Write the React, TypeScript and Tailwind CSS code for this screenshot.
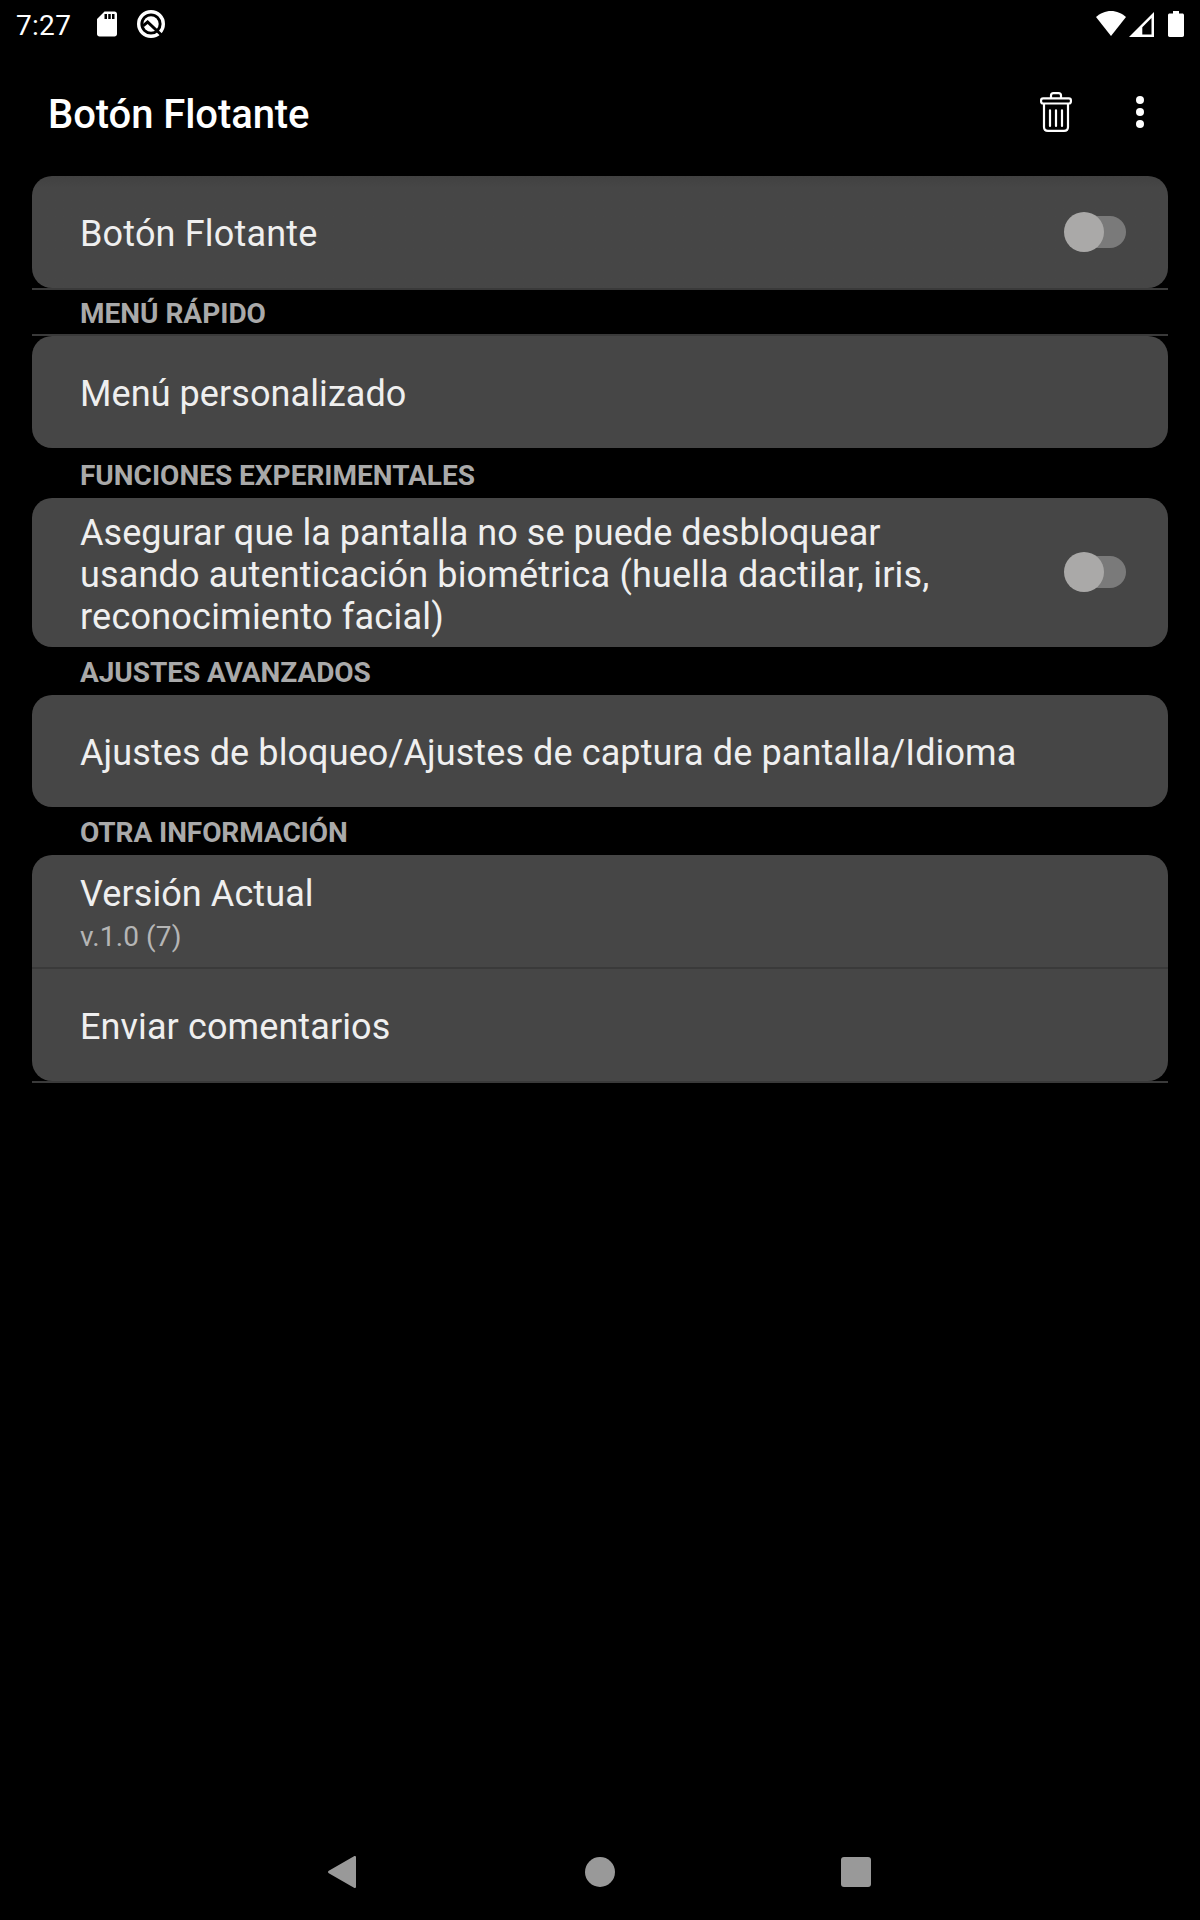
import React, { useState } from "react";

const SdCardIcon = () => (
  <svg viewBox="0 0 24 24" className="w-[30px] h-[30px]" fill="#fff">
    <path d="M18 2h-8L4.02 8 4 20c0 1.1.9 2 2 2h12c1.1 0 2-.9 2-2V4c0-1.1-.9-2-2-2zm-6 6h-2V4h2v4zm3 0h-2V4h2v4zm3 0h-2V4h2v4z" />
  </svg>
);

const AndroidQIcon = () => (
  <svg viewBox="0 0 28 28" className="w-7 h-7" fill="none">
    <circle cx="14" cy="14" r="12.3" stroke="#fff" strokeWidth="3.4" />
    <circle cx="14" cy="14" r="7.7" fill="#fff" />
    <path d="M6 15.8l4.6-3.8L24.5 25" stroke="#000" strokeWidth="3" />
  </svg>
);

const WifiIcon = () => (
  <svg viewBox="0 0 30 26" className="w-[30px] h-[26px]" fill="#fff">
    <path d="M15 25L0 6.100C4 2.500 9.300 .1 15 .1S26 2.500 30 6.100z" />
  </svg>
);

const SignalIcon = () => (
  <svg viewBox="0 0 25 25" className="w-[25px] h-[25px]">
    <path
      fill="#fff"
      fillRule="evenodd"
      d="M0 25L25 0v25zM22.500 6L13.300 15.200v7.300h9.200z"
    />
  </svg>
);

const BatteryIcon = () => (
  <svg viewBox="0 0 16 26" className="w-4 h-[26px]" fill="#fff">
    <path d="M5 0h6v2.500h3.300c1 0 1.700.7 1.700 1.700v20.100c0 1-.7 1.700-1.700 1.700H1.700C.7 26 0 25.300 0 24.300V4.200c0-1 .7-1.700 1.700-1.700H5z" />
  </svg>
);

const TrashIcon = () => (
  <svg
    viewBox="0 0 32 40"
    className="w-8 h-10"
    fill="none"
    stroke="#fff"
    strokeWidth="2.2"
    strokeLinecap="round"
    strokeLinejoin="round"
  >
    <rect x="1.100" y="6.300" width="29.800" height="5.200" rx="2" />
    <path d="M11 6V3.500C11 2 12 1.100 13.500 1.100h5C20 1.100 21 2 21 3.500V6" />
    <path d="M4 12v23c0 2.500 1.500 3.900 4 3.900h16c2.500 0 4-1.400 4-3.900V12" />
    <path d="M10 18.300v15.700M16 18.300v15.700M22 18.300v15.700" />
  </svg>
);

const MoreIcon = () => (
  <svg viewBox="0 0 8 32" className="w-2 h-8" fill="#fff">
    <circle cx="4" cy="4" r="4" />
    <circle cx="4" cy="16" r="4" />
    <circle cx="4" cy="28" r="4" />
  </svg>
);

interface SwitchProps {
  checked: boolean;
  onChange: () => void;
}

const Switch: React.FC<SwitchProps> = ({ checked, onChange }) => (
  <button
    type="button"
    role="switch"
    aria-checked={checked}
    onClick={onChange}
    className={`flex h-10 w-[62px] shrink-0 items-center ${
      checked ? "flex-row-reverse" : ""
    }`}
  >
    <span className="z-10 h-10 w-10 shrink-0 rounded-full bg-[#aaa9a8]" />
    <span className="-mx-6 h-8 w-[46px] shrink-0 rounded-full bg-[#7a7a7a]" />
  </button>
);

const SectionTitle: React.FC<{ className: string; children: string }> = ({
  className,
  children,
}) => (
  <h2
    className={`pl-12 text-[28px] leading-[34px] font-bold text-[#a9a9a9] ${className}`}
  >
    {children}
  </h2>
);

const Divider = () => <div className="h-0.5 bg-[#3a3a3a]" />;

const App: React.FC = () => {
  const [floating, setFloating] = useState(false);
  const [secure, setSecure] = useState(false);

  return (
    <div className="flex h-[1920px] w-[1200px] flex-col bg-black font-['Roboto',sans-serif] text-[36px] leading-[42px] text-[#efefef]">
      {/* status bar */}
      <div className="flex h-12 items-center justify-between px-4 text-white">
        <div className="flex items-center">
          <span className="w-[76px] pt-[3px] text-[28px] leading-[33px] tracking-[0.3px]">
            7:27
          </span>
          <SdCardIcon />
          <div className="pl-[15px]">
            <AndroidQIcon />
          </div>
        </div>
        <div className="flex items-center">
          <WifiIcon />
          <div className="pl-[3px]">
            <SignalIcon />
          </div>
          <div className="pl-3.5">
            <BatteryIcon />
          </div>
        </div>
      </div>

      {/* app bar */}
      <header className="flex h-32 items-center justify-between pr-14 pl-12 text-white">
        <h1 className="pt-1.5 text-[40px] leading-[48px] font-medium tracking-[-0.08px]">
          Botón Flotante
        </h1>
        <div className="flex items-center gap-16">
          <button type="button" aria-label="Eliminar">
            <TrashIcon />
          </button>
          <button type="button" aria-label="Más opciones">
            <MoreIcon />
          </button>
        </div>
      </header>

      <main className="grow px-8">
        <div className="flex h-28 items-center justify-between rounded-[20px] bg-[#464646] bg-linear-to-b from-[#414141] to-[#464646] to-10% pr-[42px] pl-12">
          <span className="pt-1 tracking-[0.17px]">Botón Flotante</span>
          <Switch checked={floating} onChange={() => setFloating(!floating)} />
        </div>
        <Divider />
        <SectionTitle className="h-11 pt-[7px]">MENÚ RÁPIDO</SectionTitle>
        <Divider />
        <div className="flex h-28 items-center rounded-[20px] bg-[#464646] pl-12">
          <span className="pt-1 tracking-[0.08px]">Menú personalizado</span>
        </div>

        <SectionTitle className="h-[50px] pt-[11px]">
          FUNCIONES EXPERIMENTALES
        </SectionTitle>
        <div className="flex h-[149px] items-center justify-between rounded-[20px] bg-[#464646] pr-[42px] pl-12">
          <div className="pt-[5px]">
            <p className="tracking-[0.05px]">
              Asegurar que la pantalla no se puede desbloquear
            </p>
            <p className="tracking-[0.17px]">
              usando autenticación biométrica (huella dactilar, iris,
            </p>
            <p className="tracking-[0.22px]">reconocimiento facial)</p>
          </div>
          <div className="pb-px">
            <Switch checked={secure} onChange={() => setSecure(!secure)} />
          </div>
        </div>

        <SectionTitle className="h-12 pt-[9px] tracking-[-0.06px]">
          AJUSTES AVANZADOS
        </SectionTitle>
        <div className="flex h-28 items-center rounded-[20px] bg-[#464646] pl-12">
          <span className="pt-1 tracking-[0.1px]">
            Ajustes de bloqueo/Ajustes de captura de pantalla/Idioma
          </span>
        </div>

        <SectionTitle className="h-12 pt-[9px] tracking-[-0.08px]">
          OTRA INFORMACIÓN
        </SectionTitle>
        <div className="flex h-28 flex-col rounded-t-[20px] bg-[#464646] pt-[18px] pl-12">
          <span className="tracking-[0.09px]">Versión Actual</span>
          <span className="pt-[5px] text-[28px] leading-[33px] tracking-[0.14px] text-[#b5b5b5]">
            v.1.0 (7)
          </span>
        </div>
        <Divider />
        <div className="flex h-28 items-center rounded-b-[20px] bg-[#464646] pl-12">
          <span className="pt-1 tracking-[0.1px]">Enviar comentarios</span>
        </div>
        <Divider />
      </main>

      {/* navigation bar */}
      <nav className="flex h-24 items-center pl-[328px]">
        <svg viewBox="0 0 28 32" className="h-8 w-7" fill="#999">
          <path d="M26 .3c1-.6 2 0 2 1v29.400c0 1-1 1.600-2 1L.8 17.200c-1-.6-1-1.800 0-2.400z" />
        </svg>
        <span className="ml-[229px] h-[30px] w-[30px] rounded-full bg-[#999]" />
        <span className="ml-[226px] h-[30px] w-[30px] rounded-[3px] bg-[#999]" />
      </nav>
    </div>
  );
};

export default App;
